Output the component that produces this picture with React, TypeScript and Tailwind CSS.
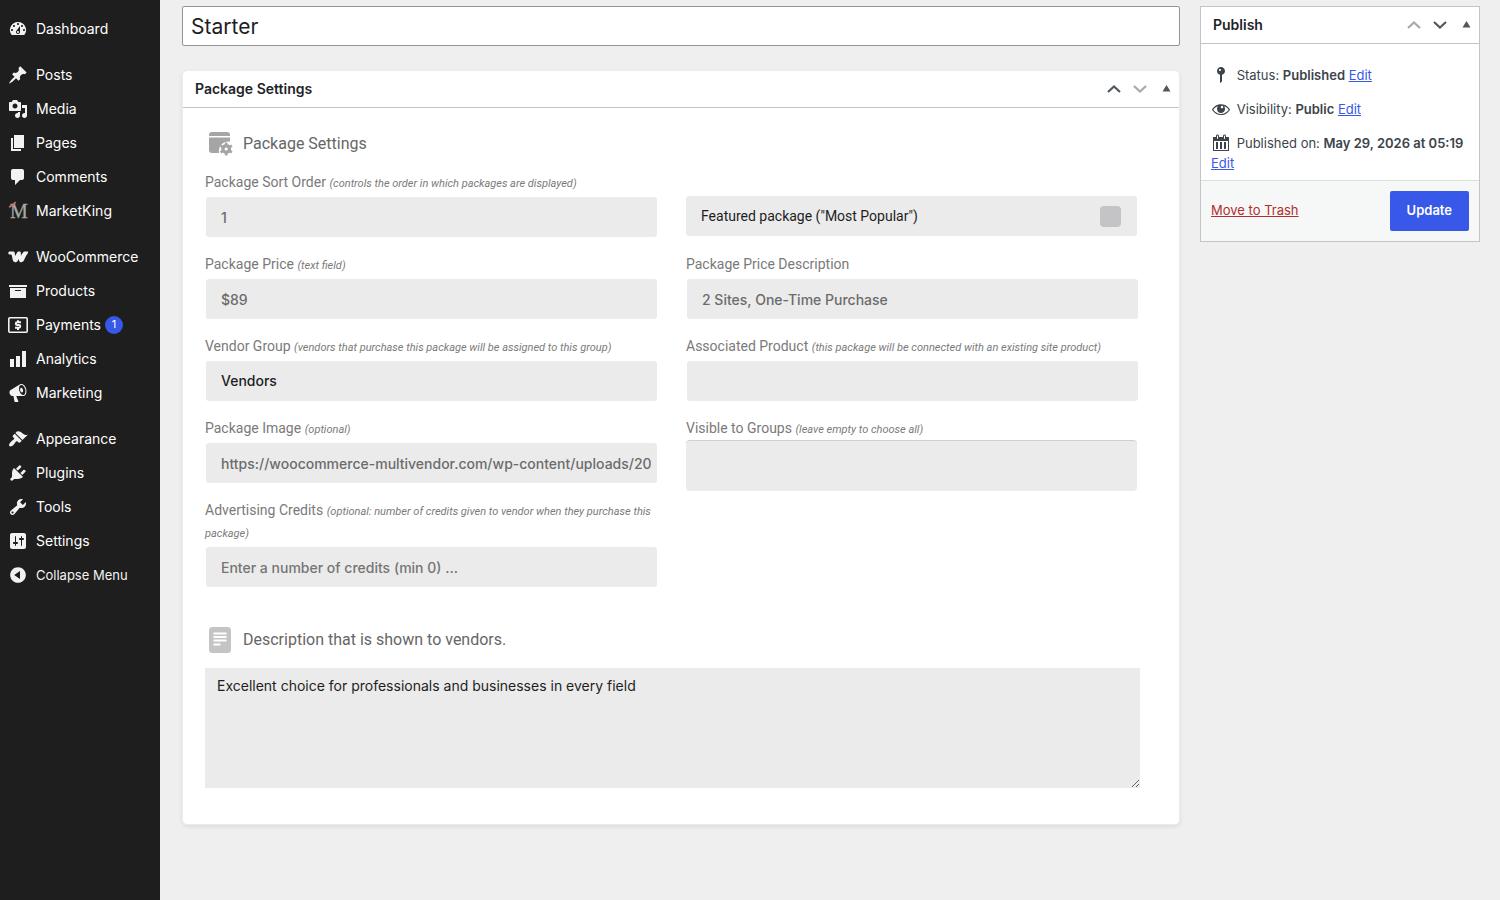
import React from "react";

type IconProps = { d: string; className?: string };

function Dashicon({ d, className = "size-5" }: IconProps) {
  return (
    <svg viewBox="0 0 20 20" className={className} fill="currentColor" fillRule="evenodd" aria-hidden="true">
      <path d={d} />
    </svg>
  );
}

const ICONS = {
  dashboard:
    "M3.76 16h12.48A7.998 7.998 0 0 0 10 3a7.998 7.998 0 0 0-6.24 13zM10 4c.55 0 1 .45 1 1s-.45 1-1 1-1-.45-1-1 .45-1 1-1zM6 6c.55 0 1 .45 1 1s-.45 1-1 1-1-.45-1-1 .45-1 1-1zm8 0c.55 0 1 .45 1 1s-.45 1-1 1-1-.45-1-1 .45-1 1-1zm-5.37 5.55L12 7v6c0 1.1-.9 2-2 2s-2-.9-2-2c0-.57.24-1.08.63-1.45zM4 10c.55 0 1 .45 1 1s-.45 1-1 1-1-.45-1-1 .45-1 1-1zm12 0c.55 0 1 .45 1 1s-.45 1-1 1-1-.45-1-1 .45-1 1-1zm-5 3c0-.55-.45-1-1-1s-1 .45-1 1 .45 1 1 1 1-.45 1-1z",
  posts:
    "M10.44 3.02l1.82-1.82 6.36 6.35-1.83 1.82c-1.05-.68-2.48-.57-3.41.36l-.75.75c-.92.93-1.04 2.35-.35 3.41l-1.83 1.82-2.41-2.41-2.8 2.79c-.42.42-3.38 2.71-3.8 2.29s1.86-3.39 2.28-3.81l2.79-2.79L4.1 9.36l1.83-1.82c1.05.69 2.48.57 3.4-.36l.75-.75c.93-.92 1.05-2.35.36-3.41z",
  media:
    "M13 11V4c0-.55-.45-1-1-1h-1.67L9 1H5L3.67 3H2c-.55 0-1 .45-1 1v7c0 .55.45 1 1 1h10c.55 0 1-.45 1-1zM7 4.5c1.38 0 2.5 1.12 2.5 2.5S8.38 9.5 7 9.5 4.5 8.38 4.5 7 5.62 4.5 7 4.5zM14 6h5v10.5c0 1.38-1.12 2.5-2.5 2.5S14 17.88 14 16.5s1.12-2.5 2.5-2.5c.17 0 .34.02.5.05V9h-3V6zm-4 8.05V13h2v3.5c0 1.38-1.12 2.5-2.5 2.5S7 17.88 7 16.5 8.12 14 9.5 14c.17 0 .34.02.5.05z",
  pages: "M6 15V2h10v13H6zm-1 1h8v2H3V5h2v11z",
  comments: "M5 2h9c1.1 0 2 .9 2 2v7c0 1.1-.9 2-2 2h-2l-5 5v-5H5c-1.1 0-2-.9-2-2V4c0-1.1.9-2 2-2z",
  products: "M19 4v2H1V4h18zM2 7h16v10H2V7zm11 3V9H7v1h6z",
  analytics: "M18 18V2h-4v16h4zm-6 0V7H8v11h4zm-6 0v-8H2v8h4z",
  marketing:
    "M18.15 5.94c.46 1.62.38 3.22-.02 4.48-.42 1.28-1.26 2.18-2.3 2.48-.16.06-.26.06-.4.06-.06.02-.12.02-.18.02-.06.02-.14.02-.22.02h-6.8l2.22 5.5c.02.14-.06.26-.14.34-.08.1-.24.16-.34.16H6.95c-.1 0-.26-.06-.34-.16-.08-.08-.16-.2-.14-.34l-1-5.5H4.25l-.02-.02c-.5.06-1.08-.18-1.54-.62s-.88-1.08-1.06-1.88c-.24-.8-.2-1.56-.02-2.2.18-.62.58-1.08 1.06-1.3l.02-.02 9-5.4c.1-.06.18-.1.24-.16.06-.04.14-.08.24-.12.16-.08.28-.12.5-.18 1.04-.3 2.24.1 3.22.98s1.84 2.24 2.26 3.86zm-2.58 5.98h-.02c.4-.1.74-.34 1.04-.7.58-.7.86-1.76.86-3.04 0-.64-.1-1.3-.28-1.98-.34-1.36-1.02-2.5-1.78-3.24s-1.68-1.1-2.46-.88c-.82.22-1.4.96-1.7 2-.32 1.04-.28 2.36.06 3.72.38 1.36 1 2.5 1.8 3.24.78.74 1.62 1.1 2.48.88zm-2.54-7.08c.22-.04.42-.02.62.04.38.16.76.48 1.02 1s.42 1.2.42 1.78c0 .3-.04.56-.12.8-.18.48-.44.84-.86.94-.34.1-.8-.06-1.14-.4s-.64-.86-.78-1.5c-.18-.62-.12-1.24.02-1.72s.48-.84.82-.94z",
  appearance:
    "M14.48 11.06L7.41 3.99l1.5-1.5c.5-.56 2.3-.47 3.51.32 1.21.8 1.43 1.28 2.91 2.1 1.18.64 2.45 1.26 4.45.85zm-.71.71L6.7 4.7 4.93 6.47c-.39.39-.39 1.02 0 1.41l1.06 1.06c.39.39.39 1.03 0 1.42-.6.6-1.43 1.11-2.21 1.69-.35.26-.7.53-1.01.84C1.43 14.23.4 16.08 1.4 17.07c.99 1 2.84-.03 4.18-1.36.31-.31.58-.66.85-1.02.57-.78 1.08-1.61 1.69-2.21.39-.39 1.02-.39 1.41 0l1.06 1.06c.39.39 1.02.39 1.41 0z",
  plugins:
    "M13.11 4.36L9.87 7.6 8 5.73l3.24-3.24c.35-.34 1.05-.2 1.56.32.52.51.66 1.21.31 1.55zm-8 1.77l.91-1.12 9.01 9.01-1.19.84c-.71.71-2.63 1.16-3.82 1.16H6.14L4.9 17.26c-.59.59-1.54.59-2.12 0-.59-.58-.59-1.53 0-2.12l1.24-1.24v-3.88c0-1.13.4-3.19 1.09-3.89zm7.26 3.97l3.24-3.24c.34-.35 1.04-.21 1.55.31.52.51.66 1.21.31 1.55l-3.24 3.25z",
  tools:
    "M16.68 9.77c-1.34 1.34-3.3 1.67-4.95.99l-5.41 6.52c-.99.99-2.59.99-3.58 0s-.99-2.59 0-3.57l6.52-5.42c-.68-1.65-.35-3.61.99-4.95 1.28-1.28 3.12-1.62 4.72-1.06l-2.89 2.89 2.82 2.82 2.86-2.87c.53 1.58.18 3.39-1.08 4.65zM3.81 16.21c.4.39 1.04.39 1.43 0 .4-.4.4-1.04 0-1.43-.39-.4-1.03-.4-1.43 0-.39.39-.39 1.03 0 1.43z",
  settings:
    "M18 16V4c0-1.1-.9-2-2-2H4c-1.1 0-2 .9-2 2v12c0 1.1.9 2 2 2h12c1.1 0 2-.9 2-2zM8 11h1c.55 0 1 .45 1 1s-.45 1-1 1H8v1.5c0 .28-.22.5-.5.5s-.5-.22-.5-.5V13H6c-.55 0-1-.45-1-1s.45-1 1-1h1V5.5c0-.28.22-.5.5-.5s.5.22.5.5V11zm5-2h-1c-.55 0-1-.45-1-1s.45-1 1-1h1V5.5c0-.28.22-.5.5-.5s.5.22.5.5V7h1c.55 0 1 .45 1 1s-.45 1-1 1h-1v5.5c0 .28-.22.5-.5.5s-.5-.22-.5-.5V9z",
  collapse:
    "M10 2.16c4.33 0 7.84 3.51 7.84 7.84s-3.51 7.84-7.84 7.84S2.16 14.33 2.16 10 5.71 2.16 10 2.16zm2 11.72V6.12L6.18 9.97z",
  woo: "M1.8 4.6h3.4c1 0 1.5.6 1.6 1.6l.3 2.8 2-3.6c.3-.5.8-.8 1.4-.8h1c.9 0 1.4.6 1.4 1.5v2.8c.9-1.9 1.9-3.5 2.9-4.2.6-.4 3.2-.3 4-.1.5.2.6.7.3 1.2-1.6 2-2.6 4.2-4 7.2-.6 1.3-1.5 2.2-2.8 2.2s-2.2-.8-2.4-2.3l-.1-.8-1.2 1.9c-.6.9-1.3 1.2-2.2 1.2-1.4 0-2.4-.8-2.7-2.4L3.9 8.8c-.2-1-.6-1.2-1.4-1.2-1.5 0-2.2-.5-2.2-1.5 0-.9.6-1.5 1.5-1.5z",
  status:
    "M14 6c0 1.86-1.28 3.41-3 3.86V16c0 1-2 2-2 2V9.86c-1.72-.45-3-2-3-3.86 0-2.21 1.79-4 4-4s4 1.79 4 4zM8 5c0 .55.45 1 1 1s1-.45 1-1-.45-1-1-1-1 .45-1 1z",
  visibility:
    "M18.3 9.5C15 4.9 8.5 3.8 3.9 7.2c-1.2.9-2.2 2.1-3 3.4.2.4.5.8.8 1.2 3.3 4.6 9.6 5.6 14.2 2.4.9-.7 1.7-1.4 2.4-2.4.3-.4.5-.8.8-1.2-.3-.4-.5-.8-.8-1.1zm-8.2-2.3c.5-.5 1.3-.5 1.8 0s.5 1.3 0 1.8-1.3.5-1.8 0-.5-1.3 0-1.8zm-.1 7.7c-3.1 0-6-1.6-7.7-4.2C3.5 9 5.1 7.8 7 7.2c-.7.8-1 1.7-1 2.7 0 2.2 1.7 4.1 4 4.1 2.2 0 4.1-1.7 4.1-4v-.1c0-1-.4-2-1.1-2.7 1.9.6 3.5 1.8 4.7 3.5-1.7 2.6-4.6 4.2-7.7 4.2z",
  calendar:
    "M15 4h3v14H2V4h3V3c0-.83.67-1.5 1.5-1.5S8 2.17 8 3v1h4V3c0-.83.67-1.5 1.5-1.5S15 2.17 15 3v1zM6 3v2.5c0 .28.22.5.5.5s.5-.22.5-.5V3c0-.28-.22-.5-.5-.5S6 2.72 6 3zm7 0v2.5c0 .28.22.5.5.5s.5-.22.5-.5V3c0-.28-.22-.5-.5-.5s-.5.22-.5.5zm4 14V8H3v9h14zM7 16V9H5v7h2zm4 0V9H9v7h2zm4 0V9h-2v7h2z",
};

function MarketKingIcon() {
  return (
    <svg viewBox="0 0 20 20" className="size-5" aria-hidden="true">
      <text x="2" y="17" fontFamily="Liberation Serif, serif" fontSize="20" fill="#a8a8a8" stroke="#a8a8a8" strokeWidth=".3">
        M
      </text>
      <path d="M1.2 6.4 3.4 4.4 4.6 4.6 7.6 1.2" fill="none" stroke="#c8736b" strokeWidth="1.8" />
    </svg>
  );
}

function PaymentsIcon() {
  return (
    <svg viewBox="0 0 20 20" className="size-5" fill="none" stroke="currentColor" aria-hidden="true">
      <rect x=".8" y="2.8" width="18.4" height="14.4" rx="1" strokeWidth="1.6" />
      <path d="M13 7.3H9.2a1.35 1.35 0 0 0 0 2.7h1.7a1.35 1.35 0 0 1 0 2.7H7M10 5.2v2M10 12.7v2.2" strokeWidth="2" />
    </svg>
  );
}

type MenuItem = { label: string; icon: React.ReactNode; badge?: string };

const MENU: MenuItem[][] = [
  [{ label: "Dashboard", icon: <Dashicon d={ICONS.dashboard} /> }],
  [
    { label: "Posts", icon: <Dashicon d={ICONS.posts} /> },
    { label: "Media", icon: <Dashicon d={ICONS.media} /> },
    { label: "Pages", icon: <Dashicon d={ICONS.pages} /> },
    { label: "Comments", icon: <Dashicon d={ICONS.comments} /> },
    { label: "MarketKing", icon: <MarketKingIcon /> },
  ],
  [
    { label: "WooCommerce", icon: <Dashicon d={ICONS.woo} /> },
    { label: "Products", icon: <Dashicon d={ICONS.products} /> },
    { label: "Payments", icon: <PaymentsIcon />, badge: "1" },
    { label: "Analytics", icon: <Dashicon d={ICONS.analytics} /> },
    { label: "Marketing", icon: <Dashicon d={ICONS.marketing} /> },
  ],
  [
    { label: "Appearance", icon: <Dashicon d={ICONS.appearance} /> },
    { label: "Plugins", icon: <Dashicon d={ICONS.plugins} /> },
    { label: "Tools", icon: <Dashicon d={ICONS.tools} /> },
    { label: "Settings", icon: <Dashicon d={ICONS.settings} /> },
  ],
];

function Sidebar() {
  return (
    <nav className="w-40 shrink-0 bg-[#1e1e1e] pt-3 text-sm text-white">
      <div className="flex flex-col gap-3">
        {MENU.map((group, i) => (
          <ul key={i}>
            {group.map((item) => (
              <li key={item.label}>
                <a href="#" className="flex h-[34px] items-center gap-2 pl-2">
                  <span className="text-[#f3f1f1]">{item.icon}</span>
                  {item.label}
                  {item.badge && (
                    <span className="-ml-1 flex size-[18px] items-center justify-center rounded-full bg-[#3858e9] text-[11px]">
                      {item.badge}
                    </span>
                  )}
                </a>
              </li>
            ))}
          </ul>
        ))}
      </div>
      <button type="button" className="flex h-[34px] items-center gap-2 pl-2 text-[13px] text-[#f3f1f1]">
        <Dashicon d={ICONS.collapse} />
        Collapse Menu
      </button>
    </nav>
  );
}

function BoxHeader({ title, first, last }: { title: string; first?: boolean; last?: boolean }) {
  return (
    <div className="flex h-[37px] items-center justify-between border-b border-[#c3c4c7] pr-1.5 pl-3">
      <h2 className="text-sm font-semibold text-[#1d2327]">{title}</h2>
      <div className="flex items-center gap-3 text-[#50575e]">
        <button type="button" aria-label="Move up" disabled={first} className="disabled:opacity-50">
          <svg viewBox="0 0 14 14" className="size-3.5" fill="none" stroke="currentColor" strokeWidth="2.2">
            <path d="M1 10l6-5.5 6 5.5" />
          </svg>
        </button>
        <button type="button" aria-label="Move down" disabled={last} className="disabled:opacity-50">
          <svg viewBox="0 0 14 14" className="size-3.5" fill="none" stroke="currentColor" strokeWidth="2.2">
            <path d="M1 4l6 5.5L13 4" />
          </svg>
        </button>
        <button type="button" aria-label="Toggle panel">
          <svg viewBox="0 0 14 14" className="size-3.5" fill="currentColor">
            <path d="M7.5 3l4 6.5h-8z" />
          </svg>
        </button>
      </div>
    </div>
  );
}

type FieldProps = { id: string; label: string; hint?: string; tight?: boolean; children: React.ReactNode };

function Field({ id, label, hint, tight, children }: FieldProps) {
  return (
    <div className={tight ? "flex flex-col gap-px" : "flex flex-col gap-1"}>
      <label htmlFor={id} className="font-[Roboto,sans-serif] text-sm leading-[22px] text-[#7a7a7a]">
        {label} {hint && <i className="text-[11px] leading-none">({hint})</i>}
      </label>
      {children}
    </div>
  );
}

const INPUT = "ml-px h-10 rounded-[3px] bg-[#ebebeb] pr-1.5 pl-[15px] text-sm font-medium text-[#6b6b6b] outline-none";

function PackageIcon() {
  return (
    <svg viewBox="0 0 24 24" className="size-6" fill="#a5a5a5" aria-hidden="true">
      <path d="M0 4V3a3 3 0 0 1 3-3h15a3 3 0 0 1 3 3v1zM0 5.5h21v4C14 8.5 9 14 10 21H3a3 3 0 0 1-3-3z" />
      <circle cx="17.2" cy="17" r="3.3" fill="none" stroke="#a5a5a5" strokeWidth="3.4" />
      <path
        d="M17.2 10.5v3M17.2 20.5v3M11.5 13.7l2.6 1.5M20.3 18.8l2.6 1.5M11.5 20.3l2.6-1.5M20.3 15.2l2.6-1.5"
        stroke="#a5a5a5"
        strokeWidth="2.6"
      />
    </svg>
  );
}

function DescriptionIcon() {
  return (
    <svg viewBox="0 0 24 26" className="h-[26px] w-6" aria-hidden="true">
      <rect width="22" height="26" rx="3.5" fill="#c4c4c6" />
      <path d="M4.5 6.5h13M4.5 10h13M4.5 13.5h13M4.5 17.5h7" stroke="#fff" strokeWidth="1.9" />
    </svg>
  );
}

function PackageSettings() {
  return (
    <section className="rounded-[5px] border border-[#ececec] bg-white shadow-[0_2px_4px_rgba(0,0,0,0.08)]">
      <BoxHeader title="Package Settings" last />
      <div className="pt-5 pr-[39px] pb-9 pl-[22px]">
        <h3 className="mb-[11px] flex h-8 items-center gap-2.5 pl-1 font-[Roboto,sans-serif] text-base text-[#666]">
          <PackageIcon />
          Package Settings
        </h3>

        <div className="grid grid-cols-2 gap-x-[29px] pr-0.5">
          <div className="flex flex-col gap-4">
            <Field id="sort" label="Package Sort Order" hint="controls the order in which packages are displayed">
              <input id="sort" className={INPUT} defaultValue="1" />
            </Field>
            <Field id="price" label="Package Price" hint="text field">
              <input id="price" className={INPUT} defaultValue="$89" />
            </Field>
            <Field id="group" label="Vendor Group" hint="vendors that purchase this package will be assigned to this group">
              <select
                id="group"
                className="ml-px h-10 appearance-none rounded-[3px] bg-[#ebebeb] px-[15px] text-sm font-medium text-[#1e1e1e] outline-none"
              >
                <option>Vendors</option>
              </select>
            </Field>
            <Field id="image" label="Package Image" hint="optional">
              <input id="image" className={INPUT} defaultValue="https://woocommerce-multivendor.com/wp-content/uploads/20" />
            </Field>
            <Field
              id="credits"
              label="Advertising Credits"
              hint="optional: number of credits given to vendor when they purchase this package"
            >
              <input
                id="credits"
                className="ml-px h-10 rounded-[3px] bg-[#ebebeb] px-[15px] text-sm font-medium outline-none placeholder:text-[#757575]"
                placeholder="Enter a number of credits (min 0) ..."
              />
            </Field>
          </div>

          <div className="flex flex-col gap-4">
            <div className="flex h-[66px] flex-col justify-end pb-px">
              <div className="mr-px flex h-10 items-center justify-between rounded-[3px] bg-[#ebebeb] pr-4 pl-[15px]">
                <label htmlFor="featured" className="font-[Roboto,sans-serif] text-sm text-[#1e1e1e]">
                  Featured package ("Most Popular")
                </label>
                <input
                  id="featured"
                  type="checkbox"
                  className="size-[21px] appearance-none rounded-[4px] bg-[#c4c4c6] checked:bg-[#3858e9]"
                />
              </div>
            </div>
            <Field id="price-desc" label="Package Price Description">
              <input id="price-desc" className={INPUT} defaultValue="2 Sites, One-Time Purchase" />
            </Field>
            <Field id="product" label="Associated Product" hint="this package will be connected with an existing site product">
              <select id="product" className="ml-px h-10 appearance-none rounded-[3px] bg-[#ebebeb] px-[15px] text-sm outline-none" />
            </Field>
            <Field id="visible" label="Visible to Groups" hint="leave empty to choose all" tight>
              <select
                id="visible"
                multiple
                className="mr-px h-[51px] appearance-none rounded-[4px] border-t border-[#cfcfcf] bg-[#ebebeb] outline-none"
              />
            </Field>
          </div>
        </div>

        <h3 className="mt-[37px] mb-3 flex h-8 items-center gap-2.5 pl-1 font-[Roboto,sans-serif] text-base text-[#666]">
          <DescriptionIcon />
          <label htmlFor="description">Description that is shown to vendors.</label>
        </h3>
        <textarea
          id="description"
          className="block h-[120px] w-full resize bg-[#ebebeb] px-3 py-2 text-sm text-[#1e1e1e] outline-none"
          defaultValue="Excellent choice for professionals and businesses in every field"
        />
      </div>
    </section>
  );
}

function EditLink() {
  return (
    <a href="#" className="text-[#3858e9] underline">
      Edit
    </a>
  );
}

function PublishBox() {
  return (
    <section className="w-[280px] shrink-0 self-start border border-[#c3c4c7] bg-white text-[13px] text-[#3c434a]">
      <BoxHeader title="Publish" first />
      <div className="flex flex-col gap-3.5 pt-[21px] pr-2 pb-[7px] pl-2.5 leading-5">
        <p>
          <Dashicon d={ICONS.status} className="mr-0.5 inline size-5 align-top" /> Status:{" "}
          <b className="font-semibold">Published</b> <EditLink />
        </p>
        <p>
          <Dashicon d={ICONS.visibility} className="mr-0.5 inline size-5 align-top" /> Visibility:{" "}
          <b className="font-semibold">Public</b> <EditLink />
        </p>
        <p>
          <Dashicon d={ICONS.calendar} className="mr-0.5 inline size-5 align-top" /> Published on:{" "}
          <b className="font-semibold">May 29, 2026 at 05:19</b> <EditLink />
        </p>
      </div>
      <div className="flex items-center justify-between border-t border-[#dcdcde] bg-[#f6f7f7] p-2.5">
        <a href="#" className="text-[#b32d2e] underline">
          Move to Trash
        </a>
        <button type="button" className="h-10 rounded-[2px] bg-[#3858e9] px-[17px] font-semibold text-white">
          Update
        </button>
      </div>
    </section>
  );
}

export default function App() {
  return (
    <div className="flex min-h-screen bg-[#efefef] font-[Inter,sans-serif]">
      <Sidebar />
      <main className="flex min-w-0 grow gap-5 pt-1.5 pr-5 pb-[75px] pl-[22px]">
        <div className="flex min-w-0 grow flex-col gap-6">
          <input
            aria-label="Package title"
            defaultValue="Starter"
            className="h-10 w-full rounded-[2px] border border-[#949494] bg-white px-2 text-[21px] text-[#1e1e1e] outline-none"
          />
          <PackageSettings />
        </div>
        <PublishBox />
      </main>
    </div>
  );
}
